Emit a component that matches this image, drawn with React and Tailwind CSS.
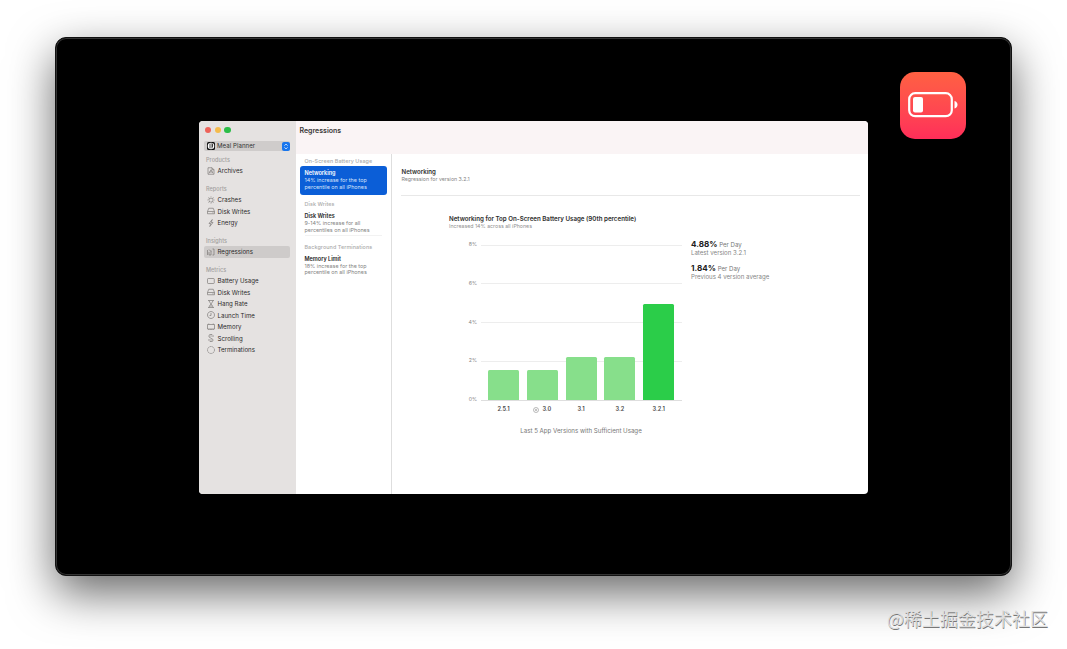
const sections = [
  { title: 'Products', items: [['archive', 'Archives']] },
  { title: 'Reports', items: [['burst', 'Crashes'], ['disk', 'Disk Writes'], ['bolt', 'Energy']] },
  { title: 'Insights', items: [['chart', 'Regressions']] },
  {
    title: 'Metrics',
    items: [
      ['battery', 'Battery Usage'],
      ['disk', 'Disk Writes'],
      ['hourglass', 'Hang Rate'],
      ['clock', 'Launch Time'],
      ['memory', 'Memory'],
      ['scroll', 'Scrolling'],
      ['dashed', 'Terminations'],
    ],
  },
];

const regressions = [
  { group: 'On-Screen Battery Usage', title: 'Networking', lines: ['14% increase for the top', 'percentile on all iPhones'] },
  { group: 'Disk Writes', title: 'Disk Writes', lines: ['9-14% increase for all', 'percentiles on all iPhones'] },
  { group: 'Background Terminations', title: 'Memory Limit', lines: ['18% increase for the top', 'percentile on all iPhones'] },
];

const bars = [
  { version: '2.5.1', height: 29.5 },
  { version: '3.0', height: 29.5, badge: true },
  { version: '3.1', height: 42.5 },
  { version: '3.2', height: 42.5 },
  { version: '3.2.1', height: 95.5, latest: true },
];

const glyphs = {
  archive: <path d="M2 1.5h8l4 4v9H2zM10 1.5v4h4M4 12.500l4-7 4 7M5 10h6" />,
  burst: <path d="M8 4l1.500 1 2-.5L11.500 6.500 13 8l-1.500 1.500.200 2-2-.2L8 12.800 6.500 11.300l-2 .2.200-2L3 8l1.500-1.500-.2-2 2 .5zM8 1v1.500M8 13.500V15M1 8h1M14 8h1M2.500 2.500l1 1M12.500 12.500l1 1M2.500 13.500l1-1M12.500 3.500l1-1" />,
  disk: <path d="M1 9l2.500-6.500h9L15 9v4.500H1zM1 9h14M11 11.500h2" />,
  bolt: <path d="M10.500 1L4 9h3.500L5.500 15 12 7H8.500z" />,
  chart: <path d="M1 4v10M4 8v6M4 3l4 4M8 5v9M11 2h3v12h-3M4 14h4" />,
  battery: <path d="M2.500 3h10.500a1.500 1.500 0 0 1 1.500 1.500v7a1.500 1.500 0 0 1-1.500 1.500H2.500A1.500 1.500 0 0 1 1 11.500v-7A1.500 1.500 0 0 1 2.500 3z" />,
  hourglass: <path d="M2 1h12M2 15h12M4 1c0 4 8 9 8 14M12 1c0 4-8 9-8 14M6 12h4" />,
  clock: <path d="M8 1a7 7 0 1 0 .01 0M8 4v5H5" />,
  memory: <path d="M1 3h14v9H1zM3.500 12v2M6.500 12v2M9.500 12v2M12.500 12v2M3.500 1v2M12.500 1v2" />,
  scroll: <path d="M4 6V2.500L6 1h4l2 2v3M4 6l8 5v2.500L10 15H6l-2-2v-3M6.500 4h3M6.500 12h3" />,
  dashed: <circle cx="8" cy="8" r="7" strokeDasharray="2.800 0.900" />,
};

function Glyph({ name }) {
  return (
    <svg viewBox="0 0 16 16" className="h-2 w-2 shrink-0" fill="none" stroke="#757271" strokeWidth="1.300" strokeLinejoin="round" aria-hidden="true">
      {glyphs[name]}
    </svg>
  );
}

function Sidebar() {
  return (
    <aside className="flex w-[96.500px] shrink-0 flex-col bg-[#e5e2e1] px-[5px]">
      <div className="flex h-[18px] items-center gap-[3.500px] pl-[1px]">
        <span className="size-[6.200px] rounded-full bg-[#ed6259]" />
        <span className="size-[6.200px] rounded-full bg-[#f4bb4c]" />
        <span className="size-[6.200px] rounded-full bg-[#2bbd48]" />
      </div>
      <div className="mt-[2px] flex h-[10px] w-[86px] items-center rounded-[2px] bg-[#cfcccb] pl-[3px]">
        <svg viewBox="0 0 16 16" className="h-2 w-2" aria-hidden="true">
          <rect width="16" height="16" rx="3" fill="#111" />
          <circle cx="8" cy="8" r="6.500" fill="#fff" />
          <path d="M6 3v10M10 13V3q2 2 1 6h-1" stroke="#111" strokeWidth="1.600" fill="none" />
        </svg>
        <span className="ml-[2px] flex-1 text-[6.100px] tracking-[0.050px] text-[#333]">Meal Planner</span>
        <svg viewBox="0 0 8 9" className="h-[9px] w-2" aria-hidden="true">
          <rect width="8" height="9" rx="2" fill="#1976ed" />
          <path d="M2.500 3.600L4 2.100l1.500 1.500M2.500 5.400L4 6.900l1.500-1.500" fill="none" stroke="#fff" strokeWidth=".8" />
        </svg>
      </div>
      <nav className="mt-[4px] flex flex-col gap-[7.500px]">
        {sections.map((section) => (
          <div key={section.title}>
            <h2 className="flex h-[10px] items-center pt-px pl-[2px] text-[5.500px] font-medium tracking-[0.050px] text-[#a29f9e]">{section.title}</h2>
            {section.items.map(([icon, label]) => (
              <div
                key={label}
                className={`flex h-[11.500px] w-[86px] items-center gap-[2.500px] rounded-[2px] pl-[3px] text-[6.100px] tracking-[0.020px] text-[#2b2929] ${label === 'Regressions' ? 'bg-[#cecbca]' : ''}`}
              >
                <Glyph name={icon} />
                <span>{label}</span>
              </div>
            ))}
          </div>
        ))}
      </nav>
    </aside>
  );
}

function RegressionList() {
  return (
    <div className="w-[96px] shrink-0 border-r border-[#dedede] px-1 pt-[3.500px]">
      {regressions.map((item, i) => (
        <section key={item.group} className="h-[42.700px]">
          <h3 className="flex h-[9px] items-center pl-[5px] text-[5.400px] font-medium tracking-[0.080px] whitespace-nowrap text-[#ababab]">{item.group}</h3>
          <div className={`h-[28.500px] rounded-[3px] pt-[3.200px] pl-[5px] ${i === 0 ? 'bg-[#0b5ed7] text-[#d5e3fa]' : 'text-[#838383]'}`}>
            <h4 className={`text-[5.500px] leading-[8px] font-semibold ${i === 0 ? 'text-white' : 'text-[#1c1c1c]'}`}>{item.title}</h4>
            {item.lines.map((line) => (
              <p key={line} className="text-[5.400px] leading-[6.800px] whitespace-nowrap">{line}</p>
            ))}
          </div>
          {i === 1 && <div className="mx-[5px] -mt-[2px] h-px bg-[#f2f2f2]" />}
        </section>
      ))}
    </div>
  );
}

function Chart() {
  return (
    <figure className="w-[242px]">
      <h3 className="text-[6.200px] leading-[9px] font-semibold whitespace-nowrap text-[#2c2c2c]">Networking for Top On-Screen Battery Usage (90th percentile)</h3>
      <p className="text-[5.250px] leading-[7px] text-[#909090]">Increased 14% across all iPhones</p>
      <div className="mt-[15px] grid h-[156px] w-[233px]">
        <div className="col-start-1 row-start-1 flex flex-col justify-between">
          {['8%', '6%', '4%', '2%', '0%'].map((tick) => (
            <div key={tick} className="flex h-px items-center">
              <span className="w-[28px] text-right text-[5.200px] text-[#858585]">{tick}</span>
              <span className={`ml-1 h-px flex-1 ${tick === '0%' ? 'bg-[#dedede]' : 'bg-[#ededed]'}`} />
            </div>
          ))}
        </div>
        <div className="z-10 col-start-1 row-start-1 mb-px ml-[39px] flex items-end gap-[7.800px]">
          {bars.map((bar) => (
            <div
              key={bar.version}
              className={`w-[31px] rounded-t-[1.500px] ${bar.latest ? 'bg-[#2bcd49]' : 'bg-[#87df8b]'}`}
              style={{ height: bar.height }}
            />
          ))}
        </div>
      </div>
      <div className="mt-[4px] ml-[39px] flex gap-[7.800px]">
        {bars.map((bar) => (
          <span key={bar.version} className="flex h-[10px] w-[31px] items-center justify-center gap-[3px] text-[5.600px] font-semibold text-[#454545]">
            {bar.badge && (
              <svg viewBox="0 0 12 12" className="h-[6px] w-[6px]" fill="none" stroke="#777" aria-hidden="true">
                <circle cx="6" cy="6" r="5" />
                <path d="M4 6h4M6 4v4" />
              </svg>
            )}
            {bar.version}
          </span>
        ))}
      </div>
      <figcaption className="mt-[11px] ml-[31px] w-[202px] text-center text-[6.150px] leading-[10px] text-[#777]">Last 5 App Versions with Sufficient Usage</figcaption>
    </figure>
  );
}

function Stat({ value, note }) {
  return (
    <div className="h-[24px] whitespace-nowrap">
      <p className="text-[6.100px] leading-[9px] text-[#777]">
        <b className="text-[8.100px] font-bold text-[#202020]">{value}</b> Per Day
      </p>
      <p className="text-[6.100px] leading-[8px] text-[#858585]">{note}</p>
    </div>
  );
}

function OrganizerWindow() {
  return (
    <div className="mt-[83px] ml-[143px] flex h-[373px] w-[669px] overflow-hidden rounded-[4px] bg-white">
      <Sidebar />
      <div className="flex min-w-0 flex-1 flex-col">
        <header className="h-[32.500px] bg-[#faf4f5] pt-[4.500px] pl-[4px] text-[7px] leading-[10px] font-semibold text-[#393737]">Regressions</header>
        <div className="flex flex-1">
          <RegressionList />
          <main className="flex-1 pl-[9px]">
            <div className="mr-[8px] h-[42.500px] border-b border-[#e8e8e8] pt-[13px] pl-px">
              <h2 className="text-[6.100px] leading-[9px] font-semibold text-[#2d2d2d]">Networking</h2>
              <p className="text-[5.250px] leading-[7px] text-[#858585]">Regression for version 3.2.1</p>
            </div>
            <div className="flex pt-[17.500px] pl-[48.500px]">
              <Chart />
              <div className="pt-[26px]">
                <Stat value="4.88%" note="Latest version 3.2.1" />
                <Stat value="1.84%" note="Previous 4 version average" />
              </div>
            </div>
          </main>
        </div>
      </div>
    </div>
  );
}

function BatteryTile() {
  return (
    <div className="absolute top-[34px] right-[45px] flex h-[66.500px] w-[66.500px] items-center justify-center rounded-[15px] bg-linear-to-b from-[#ff6042] to-[#ff2d59]">
      <svg viewBox="0 0 50 26" className="h-[26px] w-[50px]" aria-hidden="true">
        <rect x="1.200" y="1.200" width="42.600" height="23" rx="6" fill="none" stroke="#fff" strokeWidth="2.200" />
        <rect x="5" y="5" width="10" height="15.500" rx="2" fill="#fff" />
        <path d="M46.500 9q3 1 3 3.800t-3 3.800z" fill="#fff" />
      </svg>
    </div>
  );
}

export default function App() {
  return (
    <div className="relative h-[649px] w-[1067px] overflow-hidden bg-white pt-[37px] pl-[55px] font-['Inter',sans-serif]">
      <div className="relative flex h-[539px] w-[957px] items-start rounded-[11px] border border-[#111] bg-black shadow-[inset_0_0_0_1px_#333,0_17px_46px_rgba(0,0,0,0.600)]">
        <OrganizerWindow />
        <BatteryTile />
      </div>
      <p className="absolute top-[605px] left-[887px] font-['Noto_Sans_CJK_SC',sans-serif] text-[18px] leading-[27px] font-normal whitespace-nowrap text-[#dedede] [text-shadow:0.500px_0.500px_0.500px_#777]">@稀土掘金技术社区</p>
    </div>
  );
}
